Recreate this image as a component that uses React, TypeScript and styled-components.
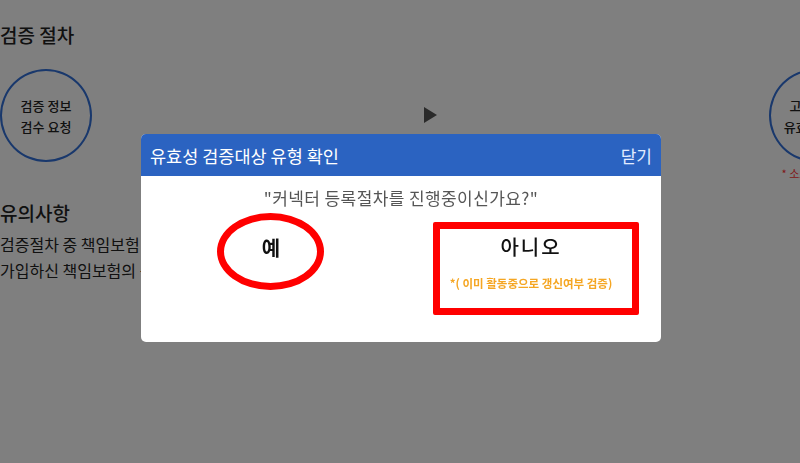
import React from "react";
import styled, { createGlobalStyle } from "styled-components";

const GlobalStyle = createGlobalStyle`
  html, body {
    margin: 0;
    padding: 0;
    background: #ffffff;
    overflow: hidden;
  }
  body {
    font-family: "Noto Sans CJK KR", "Noto Sans", sans-serif;
    color: #2a2a2a;
  }
`;

const Page = styled.div`
  width: 800px;
  height: 463px;
  padding-top: 21px;
  box-sizing: border-box;
  overflow: hidden;
`;

const SectionTitle = styled.h2<{ $gap?: number }>`
  margin: ${(p) => p.$gap ?? 0}px 0 0;
  font-size: 19px;
  line-height: 28px;
  font-weight: 500;
  color: #222;
`;

const StepRow = styled.div`
  width: 861px;
  margin-top: 20px;
  display: flex;
  justify-content: space-between;
  align-items: flex-start;
`;

const Step = styled.div`
  display: flex;
  flex-direction: column;
  align-items: center;
  width: 92px;
`;

const Circle = styled.div`
  width: 92px;
  height: 93px;
  box-sizing: border-box;
  border: 2px solid #3270d8;
  border-radius: 50%;
  display: flex;
  flex-direction: column;
  align-items: center;
  justify-content: center;
  font-size: 13px;
  font-weight: 500;
  line-height: 21px;
  color: #222;
  white-space: nowrap;
`;

const StepNote = styled.div`
  margin-top: 3px;
  font-size: 11px;
  line-height: 16px;
  color: #ff3030;
  white-space: nowrap;
`;

const Arrow = styled.svg`
  margin-top: 38px;
  display: block;
`;

const Paragraph = styled.p`
  margin: 4px 0 0;
  font-size: 16px;
  line-height: 26px;
  color: #222;
  white-space: nowrap;
`;

const Overlay = styled.div`
  position: fixed;
  inset: 0;
  background: rgba(0, 0, 0, 0.5);
`;

const Modal = styled.div`
  position: fixed;
  left: 141px;
  top: 134px;
  width: 520px;
  height: 208px;
  background: #fff;
  border-radius: 5px;
  overflow: hidden;
  display: flex;
  flex-direction: column;
`;

const ModalHeader = styled.div`
  height: 42px;
  flex-shrink: 0;
  background: #2b63c1;
  display: flex;
  align-items: center;
  justify-content: space-between;
  padding: 0 9px;
  color: #fff;
  font-size: 17.5px;
`;

const CloseButton = styled.span`
  color: #e2ecff;
  font-size: 17px;
  cursor: pointer;
`;

const ModalBody = styled.div`
  position: relative;
  flex: 1;
  padding-top: 10px;
`;

const Question = styled.div`
  text-align: center;
  font-size: 17px;
  line-height: 24px;
  color: #555;
  letter-spacing: 0.4px;
`;

const OptionRow = styled.div`
  margin-top: 24px;
  display: grid;
  grid-template-columns: 1fr 1fr;
`;

const Option = styled.div`
  display: flex;
  flex-direction: column;
  align-items: center;
  cursor: pointer;
`;

const OptionLabel = styled.div<{ $bold?: boolean }>`
  font-size: 20px;
  line-height: ${(p) => (p.$bold ? 28 : 26)}px;
  font-weight: ${(p) => (p.$bold ? 700 : 500)};
  letter-spacing: ${(p) => (p.$bold ? 0 : 2)}px;
  color: #111;
`;

const OptionHint = styled.div`
  margin-top: 16px;
  font-size: 11.5px;
  line-height: 14px;
  font-weight: 700;
  color: #f5a623;
  white-space: nowrap;
`;

const MarkEllipse = styled.div`
  position: absolute;
  left: 76px;
  top: 37px;
  width: 107px;
  height: 77px;
  box-sizing: border-box;
  border: 7px solid #ff0000;
  border-radius: 50%;
  pointer-events: none;
`;

const MarkBox = styled.div`
  position: absolute;
  left: 292px;
  top: 46px;
  width: 206px;
  height: 93px;
  box-sizing: border-box;
  border: 7px solid #ff0000;
  border-radius: 2px;
  pointer-events: none;
`;

export default function App() {
  return (
    <>
      <GlobalStyle />
      <Page>
        <SectionTitle>검증 절차</SectionTitle>
        <StepRow>
          <Step>
            <Circle>
              <span>검증 정보</span>
              <span>검수 요청</span>
            </Circle>
          </Step>
          <Arrow width="13" height="16" viewBox="0 0 13 16">
            <polygon points="0,0 13,8 0,16" fill="#555" />
          </Arrow>
          <Step>
            <Circle>
              <span>고객 정보</span>
              <span>유효성 검증</span>
            </Circle>
            <StepNote>* 소요기간 2일</StepNote>
          </Step>
        </StepRow>
        <SectionTitle $gap={18}>유의사항</SectionTitle>
        <Paragraph>
          검증절차 중 책임보험 가입 여부를 함께 확인하고 있습니다.
          <br />
          가입하신 책임보험의 증권을 미리 준비해 주시기 바랍니다.
        </Paragraph>
      </Page>
      <Overlay />
      <Modal>
        <ModalHeader>
          <span>유효성 검증대상 유형 확인</span>
          <CloseButton>닫기</CloseButton>
        </ModalHeader>
        <ModalBody>
          <Question>"커넥터 등록절차를 진행중이신가요?"</Question>
          <OptionRow>
            <Option>
              <OptionLabel $bold>예</OptionLabel>
            </Option>
            <Option>
              <OptionLabel>아니오</OptionLabel>
              <OptionHint>*( 이미 활동중으로 갱신여부 검증)</OptionHint>
            </Option>
          </OptionRow>
          <MarkEllipse />
          <MarkBox />
        </ModalBody>
      </Modal>
    </>
  );
}
